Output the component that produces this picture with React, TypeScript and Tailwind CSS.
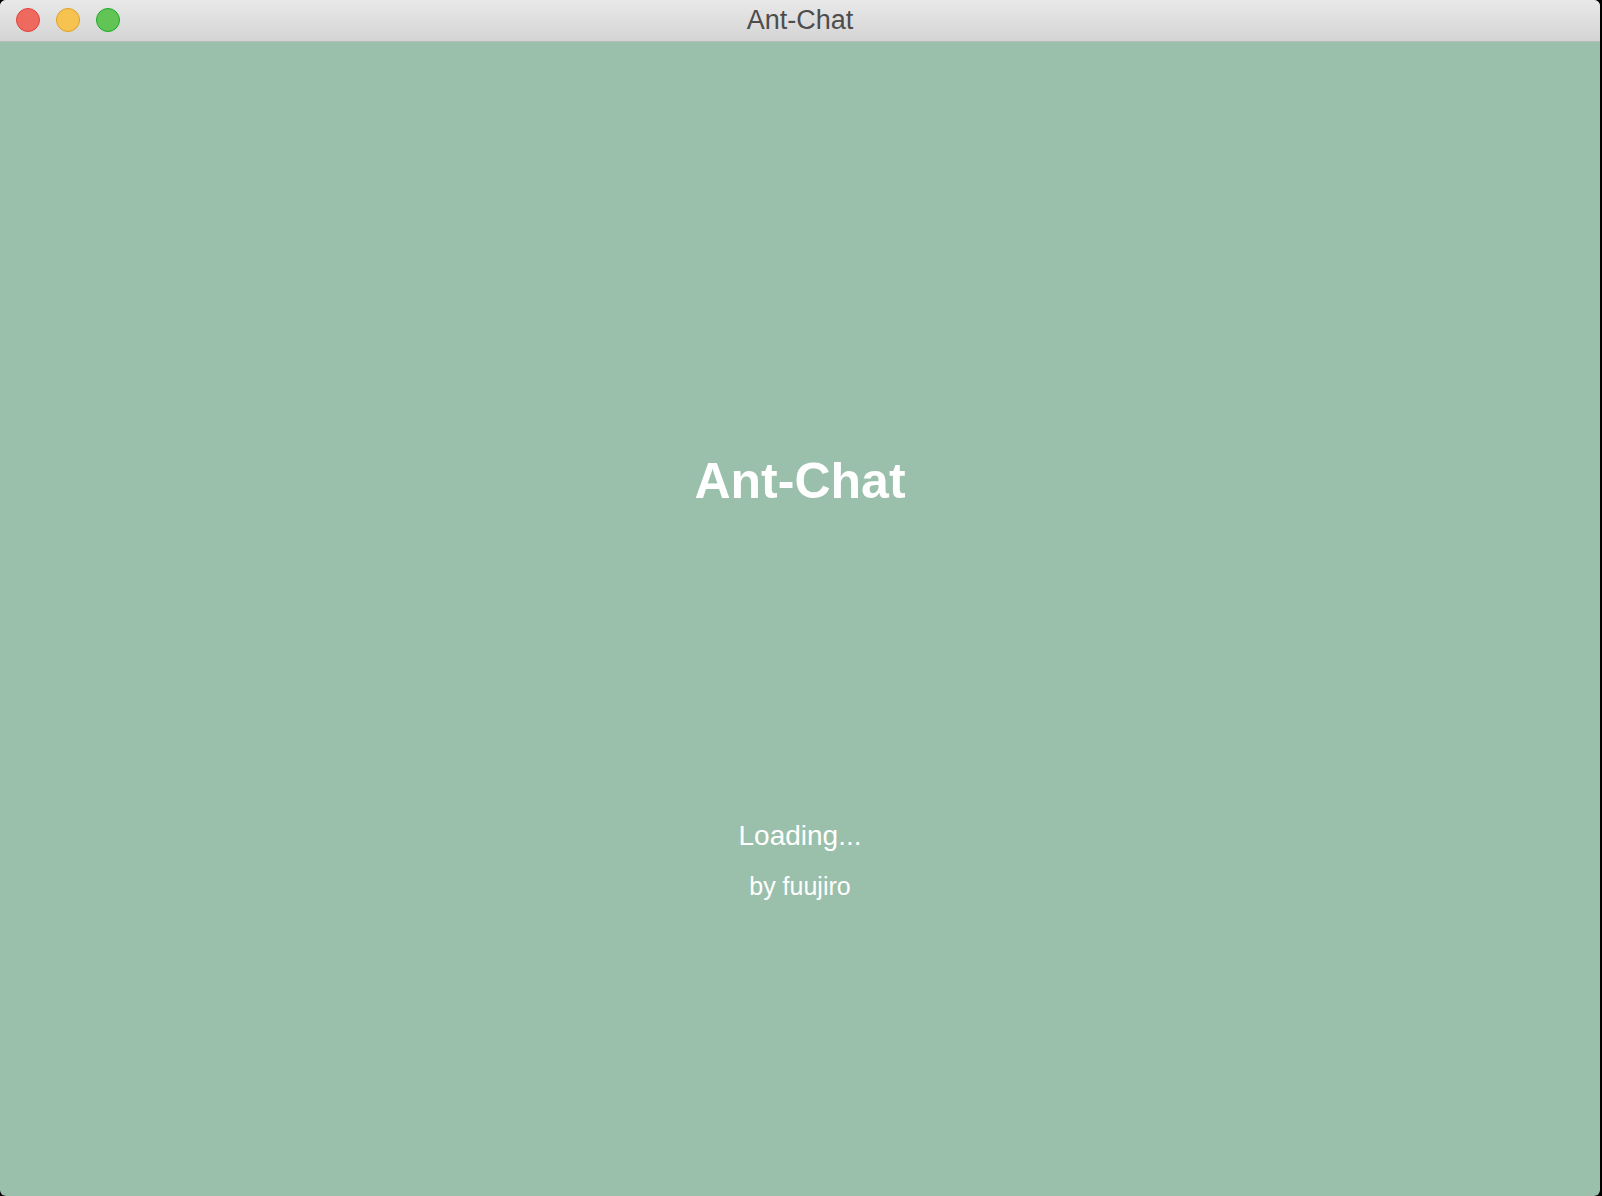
export default function App() {
  return (
    <div className="flex h-[1196px] w-[1602px] bg-black font-['Liberation_Sans',Arial,sans-serif]">
      <div className="flex h-full w-[1600px] flex-col overflow-hidden rounded-[6px] bg-[#9abfab]">
        {/* Title bar */}
        <div className="relative flex h-[42px] shrink-0 items-center justify-center border-b border-[#b9b9b9] bg-gradient-to-b from-[#e9e9e9] to-[#d4d4d4]">
          <div className="absolute left-[16px] top-[8px] flex gap-[16px]">
            <span className="h-[24px] w-[24px] rounded-full border border-[#e0443e] bg-[#ee6a5f]" />
            <span className="h-[24px] w-[24px] rounded-full border border-[#dea123] bg-[#f6c351]" />
            <span className="h-[24px] w-[24px] rounded-full border border-[#1aab29] bg-[#61c454]" />
          </div>
          <span className="text-[27px] leading-none text-[#4d4d4d]">Ant-Chat</span>
        </div>

        {/* Splash */}
        <div className="flex flex-1 flex-col items-center text-white">
          <h1 className="mt-[414px] text-[50px] font-bold leading-none">Ant-Chat</h1>
          <p className="mt-[316px] text-[28px] leading-none">Loading...</p>
          <p className="mt-[24px] text-[25px] leading-none">by fuujiro</p>
        </div>
      </div>
    </div>
  );
}
